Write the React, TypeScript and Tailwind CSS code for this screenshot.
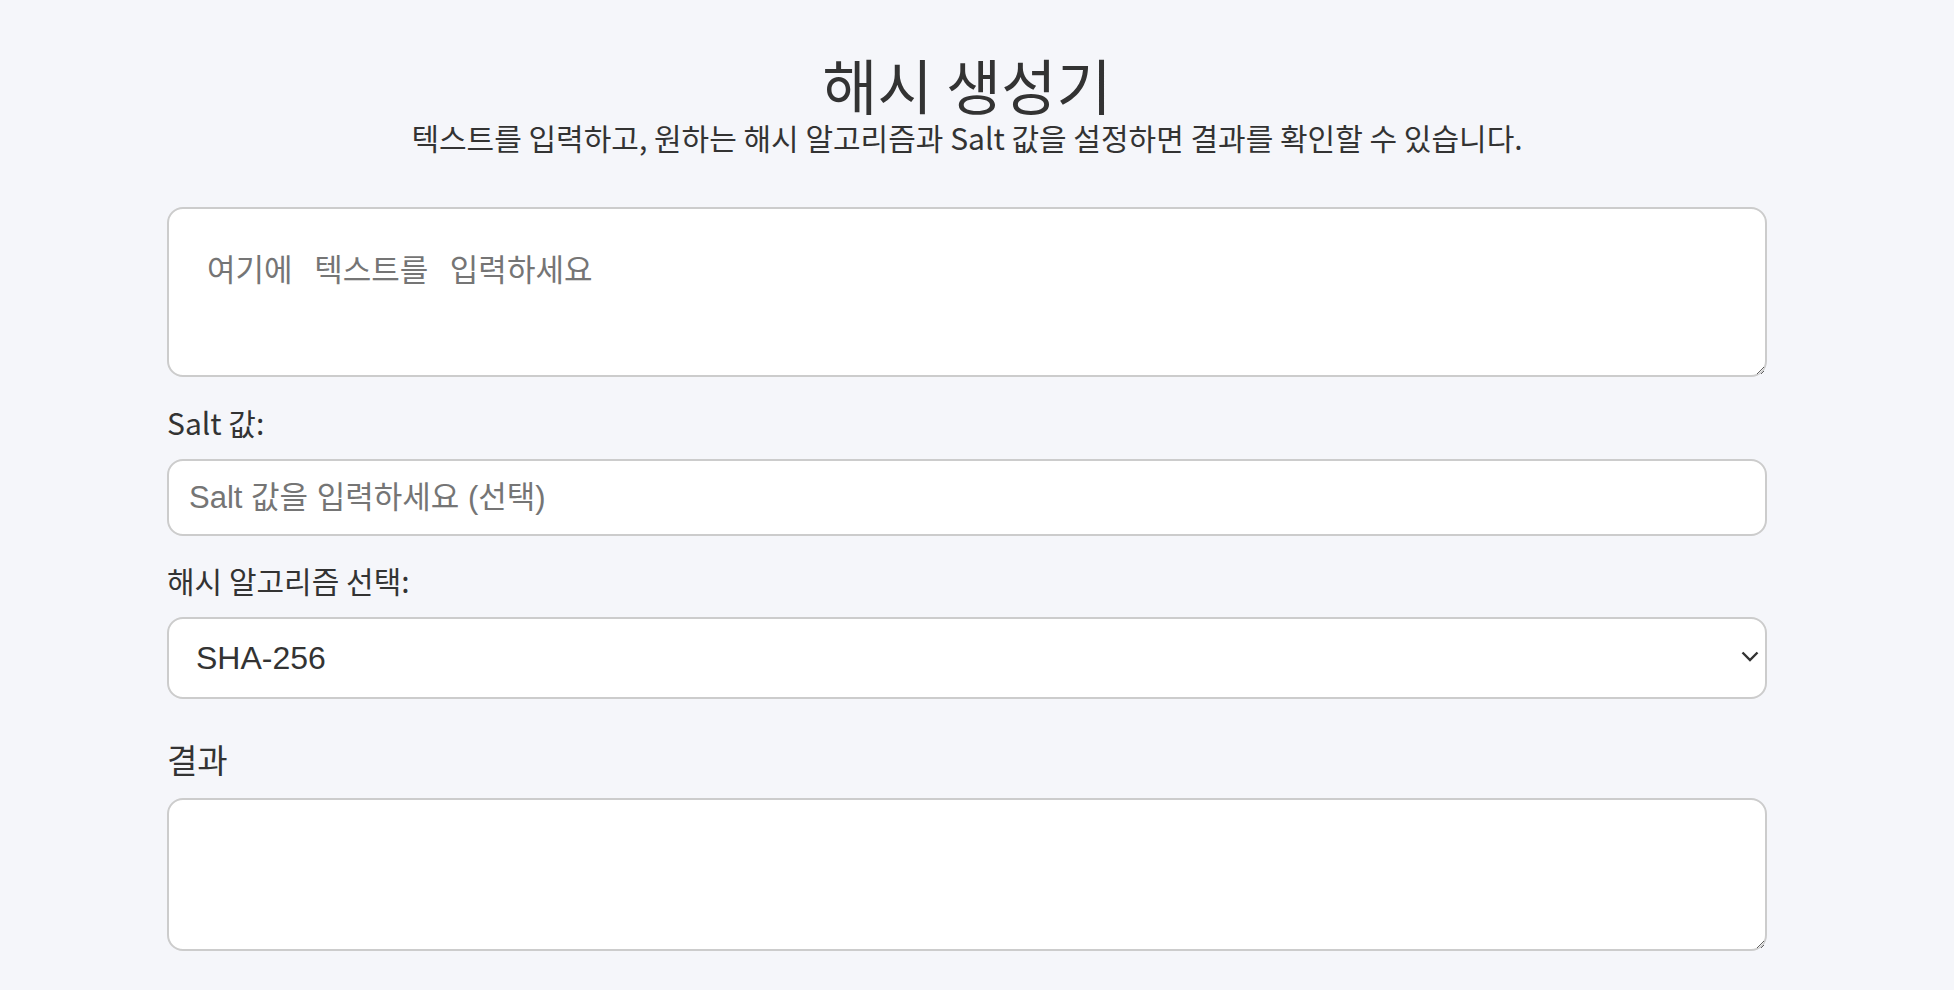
import React from "react";

export default function App() {
  const kr = { fontFamily: '"Noto Sans CJK KR", "Noto Sans", sans-serif' };
  return (
    <div className="min-h-[990px] w-full bg-[#f5f6fa] text-[#333333]" style={kr}>
      <div className="ml-[167px] flex w-[1600px] flex-col pt-[50px]">
        <h1 className="text-center text-[60px] leading-[68px] font-normal text-[#333333]">해시 생성기</h1>
        <p className="mt-[2px] text-center text-[30px] leading-[34px] text-[#333333]">
          텍스트를 입력하고, 원하는 해시 알고리즘과 Salt 값을 설정하면 결과를 확인할 수 있습니다.
        </p>

        <textarea
          className="mt-[53px] h-[170px] w-full rounded-[16px] border-2 border-[#cccccc] bg-white px-[38px] pt-[45px] pb-[20px] text-[31px] leading-[38px] text-[#333333] outline-none [word-spacing:3px] placeholder:text-[#757575]"
          style={{ fontFamily: '"Liberation Mono", "Noto Sans CJK KR", monospace' }}
          placeholder="여기에 텍스트를 입력하세요"
        />

        <label className="mt-[27px] text-[30px] leading-[36px] text-[#333333]">Salt 값:</label>
        <input
          type="text"
          className="mt-[19px] h-[77px] w-full rounded-[16px] border-2 border-[#cccccc] bg-white px-[20px] text-[31px] text-[#333333] outline-none placeholder:text-[#757575]"
          style={{ fontFamily: '"Liberation Sans", "Noto Sans CJK KR", sans-serif' }}
          placeholder="Salt 값을 입력하세요 (선택)"
        />

        <label className="mt-[26px] text-[30px] leading-[36px] text-[#333333]">해시 알고리즘 선택:</label>
        <div className="relative mt-[19px]">
          <select
            className="h-[82px] w-full appearance-none rounded-[16px] border-2 border-[#cccccc] bg-white pl-[27px] pr-[60px] text-[32px] text-[#333333] outline-none"
            style={{ fontFamily: '"Liberation Sans", "Noto Sans CJK KR", sans-serif' }}
            defaultValue="SHA-256"
          >
            <option>MD5</option>
            <option>SHA-1</option>
            <option>SHA-256</option>
            <option>SHA-512</option>
          </select>
          <svg
            className="pointer-events-none absolute right-[8px] top-[33px]"
            width="18"
            height="12"
            viewBox="0 0 18 12"
            fill="none"
          >
            <path d="M1.5 2.5 L9 10 L16.5 2.5" stroke="#333333" strokeWidth="2.4" />
          </svg>
        </div>

        <h3 className="mt-[40px] text-[33px] leading-[40px] font-normal text-[#333333]">결과</h3>
        <textarea
          className="mt-[19px] h-[153px] w-full rounded-[16px] border-2 border-[#cccccc] bg-white p-[20px] text-[29px] text-[#333333] outline-none"
          style={{ fontFamily: '"Liberation Mono", "Noto Sans CJK KR", monospace' }}
          readOnly
        />
      </div>
    </div>
  );
}
